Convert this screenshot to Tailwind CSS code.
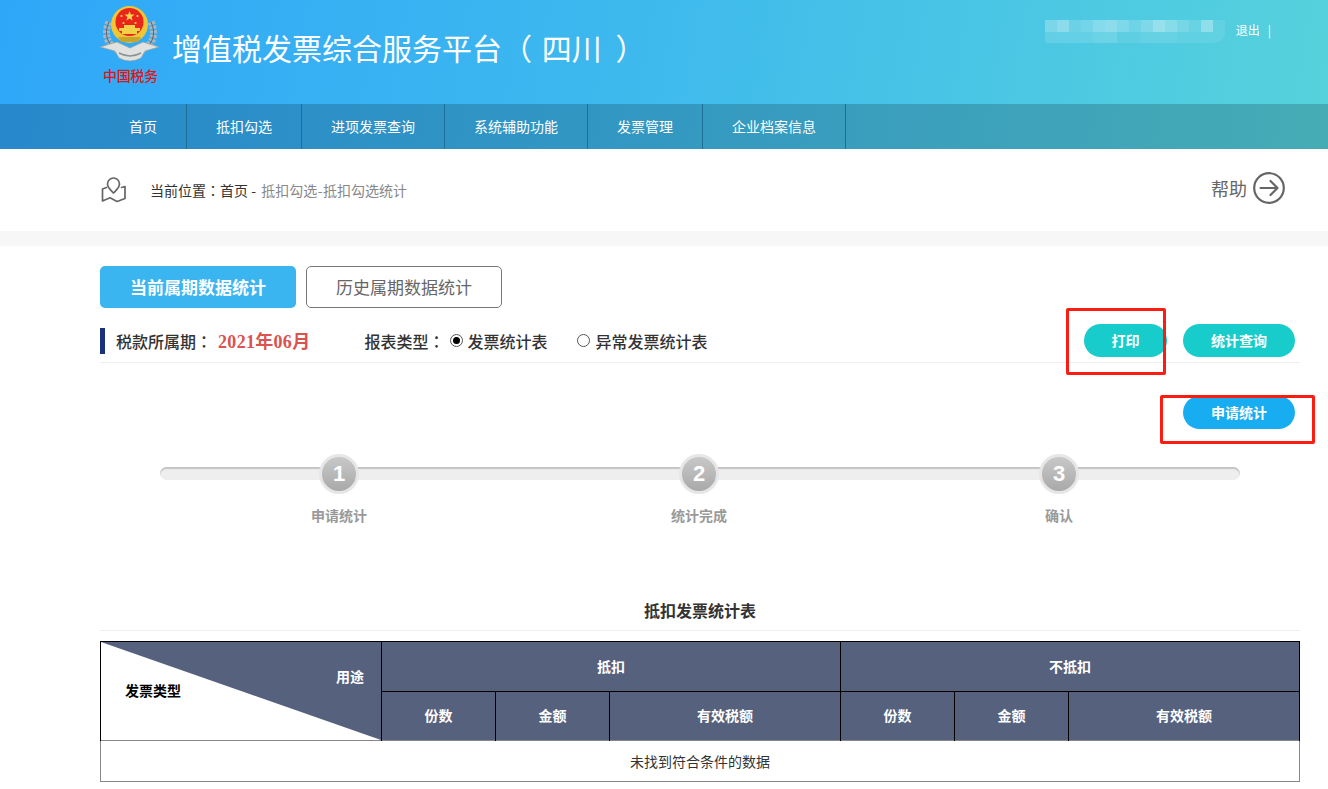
<!DOCTYPE html>
<html lang="zh-CN">
<head>
<meta charset="utf-8">
<title>增值税发票综合服务平台</title>
<script src="https://cdn.jsdelivr.net/npm/@tailwindcss/browser@4"></script>
</head>
<body class="relative h-[789px] w-[1328px] overflow-hidden bg-white font-['Noto_Sans_CJK_SC','Liberation_Sans',sans-serif] text-[14px] text-[#333]">
<header class="bg-[linear-gradient(100deg,#2fa7f9_0%,#3db8ee_45%,#56d2dc_100%)]">
  <div class="flex h-[104px] items-start pl-[100px]">
    <svg class="mt-[5px] h-[83px] w-[60px] shrink-0" viewBox="0 0 60 83">
      <path d="M9 17 C3 30 8 42 21 46 M51 17 C57 30 52 42 39 46" fill="none" stroke="#aeb4b7" stroke-width="7" stroke-dasharray="3 1.300"/>
      <path d="M9 17 C3 30 8 42 21 46 M51 17 C57 30 52 42 39 46" fill="none" stroke="#5c6164" stroke-width="1"/>
      <path d="M0 42 L17 37 L30 43 L43 37 L59 42 L45 46 L41 53 Q30 59 19 53 L15 46 Z" fill="#dfe2de" stroke="#9aa0a0" stroke-width="0.700"/>
      <path d="M19 48 Q30 54 41 48" fill="none" stroke="#8c9294" stroke-width="1.500"/>
      <circle cx="29.500" cy="19.500" r="18.500" fill="#f0c536"/>
      <circle cx="29.500" cy="17" r="14" fill="#e8261c"/>
      <path d="M29.500 6 l1.300 3.500 3.700 .1 -2.900 2.300 1 3.500 -3.100 -2 -3.100 2 1 -3.500 -2.900 -2.300 3.700 -.1 z" fill="#f7d64a"/>
      <circle cx="21.500" cy="11" r="1.100" fill="#f7d64a"/><circle cx="37.500" cy="11" r="1.100" fill="#f7d64a"/><circle cx="23.500" cy="18" r="1.100" fill="#f7d64a"/><circle cx="35.500" cy="18" r="1.100" fill="#f7d64a"/>
      <path d="M19 23 H40 V26 H37 V29 H22 V26 H19 Z M24 20 H35 V23 H24 Z" fill="#f3d04a"/>
      <path d="M18 32 H41 L38 37 H21 Z" fill="#c8a52c"/>
      <text x="3" y="76" font-size="14" font-weight="500" fill="#e01414" textLength="55" font-family="'Noto Sans CJK SC',serif">中国税务</text>
    </svg>
    <h1 class="mt-[27px] ml-[12px] text-[30px] leading-[40px] font-normal whitespace-pre text-white">增值税发票综合服务平台（ <span class="mr-[7px] ml-[3px]">四川</span> ）</h1>
    <div class="mt-[20px] ml-auto flex items-start pr-[57px]">
      <div class="mr-[11px] grid h-[23px] w-[180px] grid-cols-15 grid-rows-2 overflow-hidden rounded-br-[10px] rounded-bl-[2px] opacity-90">
        <i class="bg-white/30"></i><i class="bg-white/40"></i><i class="bg-white/20"></i><i class="bg-white/25"></i><i class="bg-white/35"></i><i class="bg-white/40"></i><i class="bg-white/30"></i><i class="bg-white/20"></i><i class="bg-white/30"></i><i class="bg-white/45"></i><i class="bg-white/35"></i><i class="bg-white/25"></i><i class="bg-white/15"></i><i class="bg-white/40"></i><i class="bg-white/10"></i>
        <i class="bg-white/15"></i><i class="bg-white/15"></i><i class="bg-white/15"></i><i class="bg-white/15"></i><i class="bg-white/20"></i><i class="bg-white/20"></i><i class="bg-white/10"></i><i class="bg-white/10"></i><i class="bg-white/15"></i><i class="bg-white/15"></i><i class="bg-white/15"></i><i class="bg-white/10"></i><i class="bg-white/10"></i><i class="bg-white/10"></i><i class="bg-white/10"></i>
      </div>
      <a class="text-[12px] leading-[20px] text-white">退出</a>
      <span class="ml-[8px] text-[12px] leading-[20px] text-white">|</span>
    </div>
  </div>
  <nav class="flex h-[45px] bg-black/18 pl-[100px] text-[14px] leading-[45px] text-white">
    <a class="border-r border-[#1c6f96] px-[29px]">首页</a>
    <a class="border-r border-[#1c6f96] px-[29px]">抵扣勾选</a>
    <a class="border-r border-[#1c6f96] px-[29px]">进项发票查询</a>
    <a class="border-r border-[#1c6f96] px-[29px]">系统辅助功能</a>
    <a class="border-r border-[#1c6f96] px-[29px]">发票管理</a>
    <a class="border-r border-[#1c6f96] px-[29px]">企业档案信息</a>
  </nav>
</header>

<div class="flex h-[82px] items-center pr-[43px] pl-[101px]">
  <svg class="h-[26px] w-[26px]" viewBox="0 0 26 26" fill="none" stroke="#666" stroke-width="1.700" stroke-linejoin="round" stroke-linecap="round">
    <path d="M12.500 16 C9 12.500 6.500 10.500 6.500 7 a6 6 0 0 1 12 0 C18.500 10.500 16 12.500 12.500 16 Z"/>
    <path d="M5.500 10.500 L1.500 12 V24 L9 20.800 L16 24.500 L24 21.500 V9.500 L20.500 10.500"/>
  </svg>
  <p class="ml-[23px] leading-[20px] text-[#333]">当前位置<span lang="zh-TW" class="font-['Noto_Sans_CJK_TC',sans-serif]">：</span>首页 - <span class="ml-[2px] text-[#888]">抵扣勾选<span class="mx-[0.5px]">-</span>抵扣勾选统计</span></p>
  <div class="mb-[4px] ml-auto flex items-center">
    <span class="text-[18px] text-[#666]">帮助</span>
    <svg class="ml-[6px] h-[32px] w-[32px]" viewBox="0 0 32 32" fill="none" stroke="#666" stroke-width="2.200" stroke-linecap="round" stroke-linejoin="round">
      <circle cx="16" cy="16" r="14.800"/>
      <path d="M7.500 16 H24 M17.500 9 L24.500 16 L17.500 23"/>
    </svg>
  </div>
</div>
<div class="h-[15px] bg-[#f7f7f7]"></div>

<main class="ml-[100px] w-[1200px]">
  <div class="mt-[20px] flex gap-[10px]">
    <button class="h-[42px] w-[196px] rounded-[5px] bg-[#3bb5f0] text-[17px] font-bold text-white">当前属期数据统计</button>
    <button class="h-[42px] w-[196px] rounded-[5px] border border-[#777] bg-white text-[17px] text-[#666]">历史属期数据统计</button>
  </div>

  <div class="flex h-[55px] items-center border-b border-[#eee] pt-[11px] pr-[5px] text-[16px] font-medium text-[#333]">
    <span class="h-[26px] w-[5px] bg-[#1a3180]"></span>
    <span class="ml-[11px]">税款所属期<span lang="zh-TW" class="font-['Noto_Sans_CJK_TC',sans-serif]">：</span></span>
    <span class="mt-[4px] ml-[6px] font-['Liberation_Serif','Noto_Sans_CJK_SC',serif] text-[18px] font-bold tracking-[0.3px] text-[#d9534f]">2021年06月</span>
    <span class="ml-[54px]">报表类型<span lang="zh-TW" class="font-['Noto_Sans_CJK_TC',sans-serif]">：</span></span>
    <span class="ml-[6px] flex h-[13px] w-[13px] items-center justify-center rounded-full border border-[#555]"><span class="h-[7px] w-[7px] rounded-full bg-black"></span></span>
    <span class="ml-[4px]">发票统计表</span>
    <span class="ml-[30px] h-[13px] w-[13px] rounded-full border border-[#555]"></span>
    <span class="ml-[5px]">异常发票统计表</span>
    <button class="mt-[-1px] ml-auto h-[33px] w-[83px] rounded-full bg-[#19cccc] text-[14px] font-bold text-white">打印</button>
    <button class="mt-[-1px] ml-[16px] h-[33px] w-[112px] rounded-full bg-[#19cccc] text-[14px] font-bold text-white">统计查询</button>
  </div>

  <div class="mt-[33px] flex justify-end pr-[5px]">
    <button class="h-[33px] w-[112px] rounded-full bg-[#18adf0] text-[14px] font-bold text-white">申请统计</button>
  </div>

  <div class="relative mt-[25px] ml-[60px] grid w-[1080px] grid-cols-3">
    <div class="absolute top-[13px] right-0 left-0 h-[13px] rounded-full bg-[#eee] shadow-[inset_0_2px_1px_#c4c4c4]"></div>
    <div class="relative flex flex-col items-center pr-[2px]">
      <span class="flex h-[40px] w-[40px] items-center justify-center rounded-full border-[3px] border-[#e6e6e6] bg-[linear-gradient(#c8c8c8,#a9a9a9)] pb-[1px] font-['Liberation_Sans',sans-serif] text-[22px] font-bold text-white">1</span>
      <span class="mt-[11px] text-[14px] leading-[20px] font-bold text-[#999]">申请统计</span>
    </div>
    <div class="relative flex flex-col items-center pr-[2px]">
      <span class="flex h-[40px] w-[40px] items-center justify-center rounded-full border-[3px] border-[#e6e6e6] bg-[linear-gradient(#c8c8c8,#a9a9a9)] pb-[1px] font-['Liberation_Sans',sans-serif] text-[22px] font-bold text-white">2</span>
      <span class="mt-[11px] text-[14px] leading-[20px] font-bold text-[#999]">统计完成</span>
    </div>
    <div class="relative flex flex-col items-center pr-[2px]">
      <span class="flex h-[40px] w-[40px] items-center justify-center rounded-full border-[3px] border-[#e6e6e6] bg-[linear-gradient(#c8c8c8,#a9a9a9)] pb-[1px] font-['Liberation_Sans',sans-serif] text-[22px] font-bold text-white">3</span>
      <span class="mt-[11px] text-[14px] leading-[20px] font-bold text-[#999]">确认</span>
    </div>
  </div>

  <h2 class="mt-[72px] h-[34px] border-b border-[#eee] text-center text-[16px] leading-[26px] font-bold text-[#333]">抵扣发票统计表</h2>

  <table class="mt-[10px] w-[1199px] table-fixed border-collapse text-center text-[14px] font-bold text-white">
    <colgroup><col class="w-[281px]"><col class="w-[114px]"><col class="w-[114px]"><col class="w-[231px]"><col class="w-[114px]"><col class="w-[114px]"><col class="w-[231px]"></colgroup>
    <tbody>
      <tr class="h-[50px]">
        <th rowspan="2" class="relative border border-b-0 border-black bg-[#56617e] p-0">
          <svg class="absolute inset-0 h-full w-full" viewBox="0 0 280 99" preserveAspectRatio="none"><polygon points="0,0 280,99 0,99" fill="#fff"/></svg>
          <span class="absolute top-[38px] left-[24px] leading-[20px] text-black">发票类型</span>
          <span class="absolute top-[24px] right-[17px] leading-[20px] text-white">用途</span>
        </th>
        <th colspan="3" class="border border-black bg-[#56617e]">抵扣</th>
        <th colspan="3" class="border border-black bg-[#56617e]">不抵扣</th>
      </tr>
      <tr class="h-[49px]">
        <th class="border border-b-0 border-black bg-[#56617e] pb-[2px]">份数</th>
        <th class="border border-b-0 border-black bg-[#56617e] pb-[2px]">金额</th>
        <th class="border border-b-0 border-black bg-[#56617e] pb-[2px]">有效税额</th>
        <th class="border border-b-0 border-black bg-[#56617e] pb-[2px]">份数</th>
        <th class="border border-b-0 border-black bg-[#56617e] pb-[2px]">金额</th>
        <th class="border border-b-0 border-black bg-[#56617e] pb-[2px]">有效税额</th>
      </tr>
      <tr class="h-[41px]">
        <td colspan="7" class="border border-[#888] font-normal text-[#333]">未找到符合条件的数据</td>
      </tr>
    </tbody>
  </table>
</main>

<div class="absolute top-[308px] left-[1066px] h-[67px] w-[100px] rounded-[2px] border-[3px] border-[#fb1d12]"></div>
<div class="absolute top-[395px] left-[1160px] h-[49px] w-[155px] rounded-[2px] border-[3px] border-[#fb1d12]"></div>
</body>
</html>
